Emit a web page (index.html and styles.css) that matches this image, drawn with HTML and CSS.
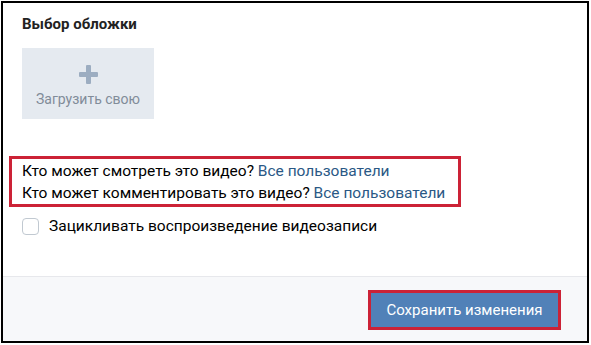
FILE: index.html
```html
<!DOCTYPE html>
<html lang="ru">
<head>
  <meta charset="UTF-8" />
  <title>Редактирование видео</title>
  <link rel="stylesheet" href="styles.css">
</head>
<body>
  <div class="frame">
    <div class="content">
      <h2 class="section-title">Выбор обложки</h2>
      <div class="upload">
        <span class="upload-plus">
          <svg width="19" height="19" viewBox="0 0 19 19"><rect x="7" y="0" width="5" height="19" rx="1" fill="#9cadc1"/><rect x="0" y="7" width="19" height="5" rx="1" fill="#9cadc1"/></svg>
        </span>
        <span class="upload-text">Загрузить свою</span>
      </div>

      <div class="privacy mark">
        <div class="privacy-row">Кто может смотреть это видео? <a href="#">Все пользователи</a></div>
        <div class="privacy-row">Кто может комментировать это видео? <a href="#">Все пользователи</a></div>
      </div>

      <label class="check">
        <span class="check-box"></span>
        Зацикливать воспроизведение видеозаписи
      </label>
    </div>
    <div class="footer">
      <span class="mark btn-mark"><button class="save-btn">Сохранить изменения</button></span>
    </div>
  </div>
</body>
</html>
```

FILE: styles.css
```css
body {
  margin: 0;
  background: #fff;
  font-family: Roboto, "Open Sans", sans-serif;
  font-size: 15.5px;
  color: #000;
}
.frame {
  margin: 1px 0 0 1px;
  width: 584px;
  height: 338px;
  border: 2px solid #000;
  background: #fff;
  display: flex;
  flex-direction: column;
}
.content {
  flex: 1;
  padding: 13px 0 0 19px;
}
.section-title {
  margin: 0 0 15px;
  font-size: 15px;
  font-weight: 700;
  line-height: 17px;
  color: #222;
}
.upload {
  width: 132px;
  height: 71px;
  background: #e5eaf0;
  display: flex;
  flex-direction: column;
  align-items: center;
}
.upload-plus {
  margin-top: 17px;
  height: 19px;
}
.upload-text {
  margin-top: 7px;
  font-size: 14px;
  color: #818c99;
}
.mark {
  border: 3px solid #cc2236;
}
.privacy {
  margin: 37px 0 0 -13px;
  width: 436px;
  padding: 1px 0 0 10px;
}
.privacy-row {
  line-height: 22px;
}
.privacy a {
  color: #2a5885;
  text-decoration: none;
}
.check {
  display: flex;
  align-items: center;
  margin-top: 10px;
  line-height: 18px;
}
.check-box {
  width: 15px;
  height: 15px;
  border: 1px solid #c1c9d1;
  border-radius: 4px;
  margin-right: 10px;
}
.footer {
  height: 64px;
  border-top: 1px solid #e7e8ec;
  background: #f7f8fa;
  display: flex;
  justify-content: flex-end;
  align-items: flex-start;
  padding-right: 26px;
}
.btn-mark {
  margin-top: 13px;
  display: block;
  line-height: 0;
}
.save-btn {
  border: 0;
  background: #5181b8;
  color: #fff;
  font-family: Roboto, sans-serif;
  font-size: 15px;
  width: 187px;
  height: 34px;
  padding: 0;
}
```
